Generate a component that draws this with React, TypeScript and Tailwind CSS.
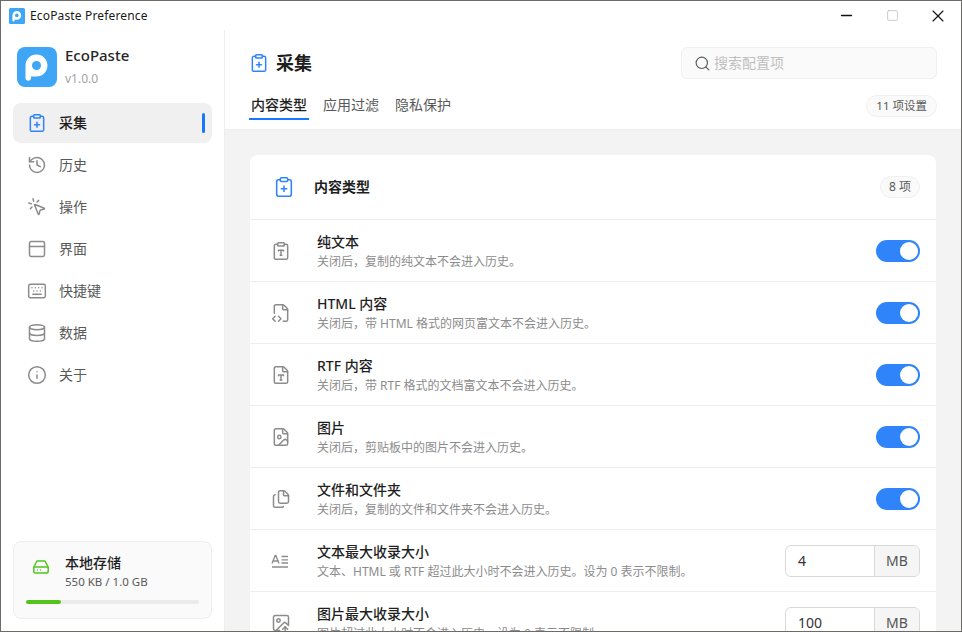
import {
  ClipboardPlus,
  ClipboardType,
  Database,
  FileCode2,
  FileImage,
  FileType,
  Files,
  History,
  ImageUp,
  Info,
  Keyboard,
  MousePointerClick,
  PanelTop,
  Search,
  Minus,
  Square,
  X,
} from 'lucide-react';
import type { ReactNode } from 'react';

const navItems = [
  { label: '采集', icon: ClipboardPlus, active: true },
  { label: '历史', icon: History },
  { label: '操作', icon: MousePointerClick },
  { label: '界面', icon: PanelTop },
  { label: '快捷键', icon: Keyboard },
  { label: '数据', icon: Database },
  { label: '关于', icon: Info },
];

function Logo({ size, radius }: { size: number; radius: number }) {
  return (
    <svg width={size} height={size} viewBox="0 0 40 40" className="shrink-0">
      <rect width="40" height="40" rx={radius} fill="#3ea6f5" />
      <path
        d="M8.500 31V18.500C8.500 12.400 13.400 7.500 19.500 7.500S30.500 12.400 30.500 18.500 25.600 29.500 19.500 29.500H14V31C14 34.600 8.500 34.600 8.500 31z"
        fill="#fff"
      />
      <circle cx="19.500" cy="18.500" r="4.500" fill="#3ea6f5" />
    </svg>
  );
}

function TextSizeIcon() {
  return (
    <svg width="18" height="18" viewBox="0 0 18 18" fill="none" stroke="#8c8c8c" strokeWidth="1.3">
      <path d="M1 11.500 4.200 3.500h.6L8 11.500M2.200 9h5.600M10.500 4.500H17M10.500 7.800H17M10.500 11H17M1 15h16" />
    </svg>
  );
}

function DriveIcon() {
  return (
    <svg width="18" height="18" viewBox="0 0 18 18" fill="none" stroke="#52c41a" strokeWidth="1.500">
      <path d="M5 3h8l3.200 6v4.500a1.500 1.500 0 0 1-1.500 1.500H3.300a1.500 1.500 0 0 1-1.500-1.500V9L5 3z" strokeLinejoin="round" />
      <path d="M2 9h14M5 12h.8M8 12h.8" />
    </svg>
  );
}

function Switch() {
  return (
    <div className="flex h-[22px] w-[44px] items-center justify-end rounded-full bg-[#2f84fa] pr-[2px]">
      <div className="h-[18px] w-[18px] rounded-full bg-white" />
    </div>
  );
}

function SizeInput({ value }: { value: string }) {
  return (
    <div className="flex h-8 w-[135px] rounded-md border border-[#d9d9d9] text-sm text-[#333]">
      <div className="flex-1 px-3 leading-[30px]">{value}</div>
      <div className="w-[45px] rounded-r-md border-l border-[#d9d9d9] bg-[#f5f5f5] text-center leading-[30px] text-[#555]">MB</div>
    </div>
  );
}

interface RowProps {
  icon: ReactNode;
  title: string;
  desc: string;
  control: ReactNode;
}

function Row({ icon, title, desc, control }: RowProps) {
  return (
    <div className="flex h-[62px] shrink-0 items-center border-t border-[#eeeeee] pl-[21px] pr-4">
      <div className="flex w-[46px] shrink-0 items-center">{icon}</div>
      <div className="min-w-0 flex-1">
        <div className="text-sm font-medium leading-[20px] text-[#1f1f1f]">{title}</div>
        <div className="mt-px text-xs leading-[17px] text-[#8c8c8c]">{desc}</div>
      </div>
      {control}
    </div>
  );
}

const grayIcon = { size: 20, color: '#8c8c8c', strokeWidth: 1.8 };

const rows: RowProps[] = [
  { icon: <ClipboardType {...grayIcon} />, title: '纯文本', desc: '关闭后，复制的纯文本不会进入历史。', control: <Switch /> },
  { icon: <FileCode2 {...grayIcon} />, title: 'HTML 内容', desc: '关闭后，带 HTML 格式的网页富文本不会进入历史。', control: <Switch /> },
  { icon: <FileType {...grayIcon} />, title: 'RTF 内容', desc: '关闭后，带 RTF 格式的文档富文本不会进入历史。', control: <Switch /> },
  { icon: <FileImage {...grayIcon} />, title: '图片', desc: '关闭后，剪贴板中的图片不会进入历史。', control: <Switch /> },
  { icon: <Files {...grayIcon} />, title: '文件和文件夹', desc: '关闭后，复制的文件和文件夹不会进入历史。', control: <Switch /> },
  { icon: <TextSizeIcon />, title: '文本最大收录大小', desc: '文本、HTML 或 RTF 超过此大小时不会进入历史。设为 0 表示不限制。', control: <SizeInput value="4" /> },
  { icon: <ImageUp {...grayIcon} />, title: '图片最大收录大小', desc: '图片超过此大小时不会进入历史。设为 0 表示不限制。', control: <SizeInput value="100" /> },
];

export default function App() {
  return (
    <div className="flex h-[632px] w-[962px] flex-col overflow-hidden border border-[#6f6a6a] bg-white font-['Noto_Sans','Noto_Sans_CJK_SC',sans-serif] text-[#1f1f1f]">
      {/* title bar */}
      <div className="flex h-[29px] shrink-0 items-center pl-[8px]">
        <Logo size={16} radius={4} />
        <span className="ml-[5px] mt-px text-[12px] tracking-[0.15px] text-[#1a1a1a]">EcoPaste Preference</span>
        <div className="ml-auto flex items-center">
          <div className="flex w-[46px] justify-center"><Minus size={17} color="#111" strokeWidth={2} /></div>
          <div className="flex w-[46px] justify-center"><Square size={13} color="#c4c4c4" strokeWidth={1.6} /></div>
          <div className="flex w-[46px] justify-center"><X size={20} color="#111" strokeWidth={1.3} /></div>
        </div>
      </div>

      <div className="flex min-h-0 flex-1">
        {/* sidebar */}
        <aside className="flex w-[224px] shrink-0 flex-col border-r border-[#eeeeee] px-3 pb-3">
          <div className="flex h-[57px] shrink-0 items-start gap-2 px-1 pt-[17px]">
            <Logo size={40} radius={8} />
            <div className="-mt-[2px]">
              <div className="text-[15px] font-medium leading-[20px] text-[#262626]">EcoPaste</div>
              <div className="mt-[6px] text-xs leading-[16px] text-[#a3a3a3]">v1.0.0</div>
            </div>
          </div>

          <nav className="mt-4 flex flex-col gap-[2px]">
            {navItems.map((item) => (
              <div
                key={item.label}
                className={`relative flex h-10 items-center rounded-lg pl-[14px] text-sm ${
                  item.active ? 'bg-[#f0f0f0] font-medium text-[#1f1f1f]' : 'text-[#595959]'
                }`}
              >
                <item.icon size={20} strokeWidth={1.8} color={item.active ? '#2f84fa' : '#8c8c8c'} />
                <span className="ml-[12px]">{item.label}</span>
                {item.active && <div className="absolute right-[7px] top-[10px] h-5 w-[3px] rounded-full bg-[#1677ff]" />}
              </div>
            ))}
          </nav>

          <div className="mt-auto h-[78px] rounded-lg border border-[#eeeeee] bg-[#fafafa] px-3 pt-[11px]">
            <div className="flex items-start">
              <div className="mt-[5px] w-[39px] shrink-0 pl-[6px]"><DriveIcon /></div>
              <div>
                <div className="text-sm font-medium leading-[19px] text-[#1f1f1f]">本地存储</div>
                <div className="text-[11.500px] leading-[19px] text-[#595959]">550 KB / 1.0 GB</div>
              </div>
            </div>
            <div className="mt-[9px] h-1 rounded-full bg-[#ebebeb]">
              <div className="h-1 w-[35px] rounded-full bg-[#52c41a]" />
            </div>
          </div>
        </aside>

        {/* main */}
        <main className="flex min-w-0 flex-1 flex-col">
          <header className="h-[100px] shrink-0 border-b border-[#eeeeee] pl-6 pr-6">
            <div className="flex h-[61px] items-center pt-[5px]">
              <ClipboardPlus size={20} strokeWidth={1.8} color="#2f84fa" />
              <h1 className="ml-[7px] text-lg font-bold text-[#1f1f1f]">采集</h1>
              <div className="ml-auto flex h-8 w-[256px] items-center rounded-md border border-[#f0f0f0] bg-[#fafafa] pl-[12px] text-sm text-[#bfbfbf]">
                <Search size={17} color="#595959" strokeWidth={1.6} />
                <span className="ml-[3px]">搜索配置项</span>
              </div>
            </div>
            <div className="mt-px flex h-[37px] items-start justify-between">
              <div className="flex gap-3 text-sm text-[#595959]">
                <div className="border-b-2 border-[#1677ff] px-[2px] pb-[3px] pt-[2px] font-medium leading-[21px] text-[#1f1f1f]">内容类型</div>
                <div className="px-[2px] pt-[2px] leading-[21px]">应用过滤</div>
                <div className="px-[2px] pt-[2px] leading-[21px]">隐私保护</div>
              </div>
              <div className="mt-[3px] rounded-full border border-[#f0f0f0] bg-[#fafafa] px-[9px] text-[11.500px] leading-[20px] text-[#595959]">11 项设置</div>
            </div>
          </header>

          <div className="min-h-0 flex-1 overflow-hidden bg-[#f3f3f3] px-[25px] pt-[25px]">
            <section className="overflow-hidden rounded-t-lg bg-white">
              <div className="flex h-[64px] items-center pl-[23px] pr-4">
                <ClipboardPlus size={22} strokeWidth={1.7} color="#2f84fa" />
                <h2 className="ml-[19px] text-sm font-bold text-[#1f1f1f]">内容类型</h2>
                <span className="ml-auto rounded-full border border-[#f0f0f0] bg-[#fafafa] px-[8px] text-xs leading-[20px] text-[#595959]">8 项</span>
              </div>
              {rows.map((row) => (
                <Row key={row.title} {...row} />
              ))}
            </section>
          </div>
        </main>
      </div>
    </div>
  );
}
